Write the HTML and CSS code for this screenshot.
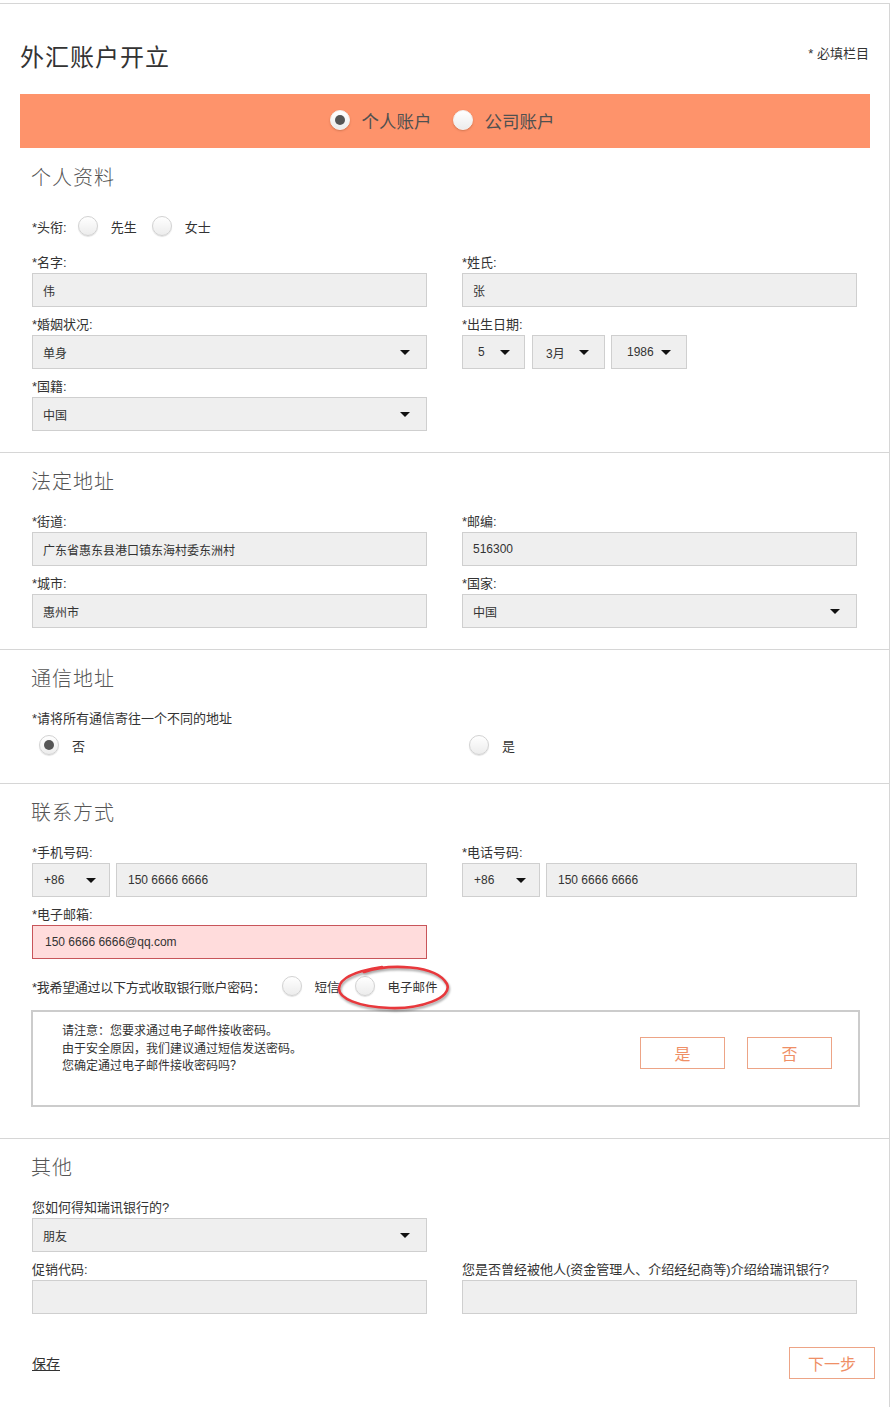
FILE: index.html
```html
<!DOCTYPE html>
<html lang="zh-CN">
<head>
<meta charset="utf-8">
<title>外汇账户开立</title>
<link rel="stylesheet" href="styles.css">
</head>
<body>
<div class="page">
  <header class="head">
    <h1 class="title">外汇账户开立</h1>
    <span class="req">* 必填栏目</span>
  </header>

  <div class="type-bar">
    <span class="radio light checked"></span><span class="type-txt">个人账户</span>
    <span class="radio light"></span><span class="type-txt last">公司账户</span>
  </div>

  <section class="sec first">
    <h2>个人资料</h2>
    <div class="title-row">
      <span class="lbl-inline">*头衔:</span>
      <span class="radio"></span><span class="rtxt">先生</span>
      <span class="radio"></span><span class="rtxt">女士</span>
    </div>
    <div class="grid">
      <div class="field"><div class="lbl">*名字:</div><div class="input">伟</div></div>
      <div class="field"><div class="lbl">*姓氏:</div><div class="input">张</div></div>
      <div class="field"><div class="lbl">*婚姻状况:</div><div class="input select">单身</div></div>
      <div class="field"><div class="lbl">*出生日期:</div>
        <div class="date">
          <div class="input select d1">5</div>
          <div class="input select d2">3月</div>
          <div class="input select d3">1986</div>
        </div>
      </div>
      <div class="field"><div class="lbl">*国籍:</div><div class="input select">中国</div></div>
    </div>
  </section>

  <section class="sec">
    <h2>法定地址</h2>
    <div class="grid">
      <div class="field"><div class="lbl">*街道:</div><div class="input">广东省惠东县港口镇东海村委东洲村</div></div>
      <div class="field"><div class="lbl">*邮编:</div><div class="input">516300</div></div>
      <div class="field"><div class="lbl">*城市:</div><div class="input">惠州市</div></div>
      <div class="field"><div class="lbl">*国家:</div><div class="input select">中国</div></div>
    </div>
  </section>

  <section class="sec s3">
    <h2>通信地址</h2>
    <div class="lbl">*请将所有通信寄往一个不同的地址</div>
    <div class="grid comm">
      <div class="comm-opt"><span class="radio checked"></span><span class="ctxt">否</span></div>
      <div class="comm-opt"><span class="radio"></span><span class="ctxt">是</span></div>
    </div>
  </section>

  <section class="sec s4">
    <h2>联系方式</h2>
    <div class="grid">
      <div class="field"><div class="lbl">*手机号码:</div>
        <div class="phone"><div class="input select code">+86</div><div class="input num">150 6666 6666</div></div>
      </div>
      <div class="field"><div class="lbl">*电话号码:</div>
        <div class="phone"><div class="input select code">+86</div><div class="input num">150 6666 6666</div></div>
      </div>
      <div class="field"><div class="lbl">*电子邮箱:</div><div class="input invalid">150 6666 6666@qq.com</div></div>
    </div>
    <div class="pass-row">
      <span class="lbl-inline pass-lbl">*我希望通过以下方式收取银行账户密码：</span>
      <span class="radio"></span><span class="ptxt">短信</span>
      <span class="radio"></span><span class="ptxt">电子邮件</span>
      <svg class="mark" width="116" height="48" viewBox="0 0 116 48">
        <path d="M28 8 C52 0 100 0 111 20 C117 34 84 45 54 44 C22 43 2 34 3 24 C4 14 20 7 46 3" fill="none" stroke="#e8383c" stroke-width="2.6" stroke-linecap="round"/>
      </svg>
    </div>
    <div class="notice">
      <div class="notice-txt">
        <div>请注意：您要求通过电子邮件接收密码。</div>
        <div>由于安全原因，我们建议通过短信发送密码。</div>
        <div>您确定通过电子邮件接收密码吗？</div>
      </div>
      <div class="notice-btns">
        <span class="btn">是</span>
        <span class="btn">否</span>
      </div>
    </div>
  </section>

  <section class="sec s5">
    <h2>其他</h2>
    <div class="grid">
      <div class="field"><div class="lbl">您如何得知瑞讯银行的?</div><div class="input select">朋友</div></div>
      <div class="field"></div>
      <div class="field"><div class="lbl">促销代码:</div><div class="input"></div></div>
      <div class="field"><div class="lbl">您是否曾经被他人(资金管理人、介绍经纪商等)介绍给瑞讯银行?</div><div class="input"></div></div>
    </div>
    <div class="footer">
      <a class="save">保存</a>
      <span class="btn next">下一步</span>
    </div>
  </section>
</div>
</body>
</html>
```

FILE: styles.css
```css
html, body {
  margin: 0;
  padding: 0;
  background: #fff;
}
body {
  font-family: "Liberation Sans", "Noto Sans CJK SC", sans-serif;
  color: #333;
  padding-top: 3px;
}
.page {
  width: 889px;
  border-top: 1px solid #d6d6d6;
  border-right: 1px solid #d6d6d6;
  min-height: 1420px;
}
.head {
  display: flex;
  justify-content: space-between;
  align-items: flex-start;
  padding: 37px 20px 0 20px;
}
.title {
  margin: 0;
  font-size: 24px;
  line-height: 34px;
  font-weight: normal;
  letter-spacing: 1px;
  color: #333;
}
.req {
  margin-top: 5px;
  font-size: 13px;
  line-height: 16px;
  color: #333;
}
.type-bar {
  margin: 19px 19px 0 20px;
  height: 54px;
  background: #fe936b;
  display: flex;
  align-items: center;
  justify-content: center;
  padding-right: 6px;
  padding-bottom: 2px;
  box-sizing: border-box;
}
.type-txt {
  font-size: 17.5px;
  color: #505050;
  margin-left: 12px;
  margin-right: 21px;
}
.type-txt.last { margin-right: 0; }

.radio {
  display: inline-block;
  flex: none;
  position: relative;
  box-sizing: border-box;
  width: 20px;
  height: 20px;
  border-radius: 50%;
  border: 1px solid #d2d2d2;
  background: linear-gradient(#ffffff, #ececec);
  box-shadow: 0 1px 1px rgba(0,0,0,0.12);
}
.radio.light {
  border-color: #f1f1f1;
  box-shadow: 0 1px 2px rgba(120,60,30,0.35);
}
.radio.checked::after {
  content: "";
  position: absolute;
  left: 4px;
  top: 4px;
  width: 10px;
  height: 10px;
  border-radius: 50%;
  background: #555;
}

.sec {
  border-top: 1px solid #d6d6d6;
  padding: 15px 32px 21px 32px;
}
.sec.first {
  border-top: none;
  padding-top: 16px;
}
.sec h2 {
  margin: 0 0 16px -1px;
  font-size: 20px;
  line-height: 28px;
  font-weight: 300;
  letter-spacing: 1px;
  color: #555;
}
.title-row {
  display: flex;
  align-items: center;
  height: 20px;
  margin: 24px 0 17px 0;
  font-size: 13px;
}
.lbl-inline { margin-right: 11px; }
.rtxt {
  margin-left: 13px;
  margin-right: 15px;
}
.grid {
  display: grid;
  grid-template-columns: 395px 395px;
  column-gap: 35px;
  row-gap: 8px;
}
.lbl {
  font-size: 13px;
  line-height: 20px;
  height: 20px;
  white-space: nowrap;
}
.input {
  box-sizing: border-box;
  height: 34px;
  border: 1px solid #cfcfcf;
  background: #efefef;
  padding: 0 10px;
  display: flex;
  align-items: center;
  font-size: 12px;
  color: #333;
  white-space: nowrap;
}
.select {
  justify-content: space-between;
  padding-right: 16px;
}
.select::after {
  content: "";
  width: 0;
  height: 0;
  border-left: 5px solid transparent;
  border-right: 5px solid transparent;
  border-top: 5px solid #111;
}
.date {
  display: flex;
}
.date .d1 { width: 63px; padding: 0 14px 0 15px; }
.date .d2 { width: 73px; padding: 0 15px 0 13px; margin-left: 7px; }
.date .d3 { width: 76px; padding: 0 15px 0 15px; margin-left: 6px; }

.comm {
  margin-top: 6px;
}
.comm-opt {
  display: flex;
  align-items: center;
  padding-left: 7px;
  height: 20px;
  font-size: 13px;
}
.ctxt { margin-left: 13px; }
.sec.s3 { padding-bottom: 28px; }

.phone {
  display: flex;
  gap: 6px;
}
.phone .code {
  width: 78px;
  flex: none;
  padding: 0 13px 0 11px;
}
.phone .num {
  flex: 1;
  padding-left: 11px;
}
.input.invalid {
  background: #ffdcdc;
  border-color: #c8555a;
  padding-left: 12px;
}
.pass-row {
  position: relative;
  display: flex;
  align-items: center;
  height: 20px;
  margin-top: 17px;
  font-size: 13px;
}
.pass-lbl {
  margin-right: 17px;
  letter-spacing: -0.3px;
}
.ptxt {
  font-size: 12.5px;
  margin-left: 12px;
  margin-right: 16px;
}
.mark {
  position: absolute;
  left: 304px;
  top: -12px;
  filter: drop-shadow(1px 2px 1px rgba(0,0,0,0.35));
}
.notice {
  box-sizing: border-box;
  width: 829px;
  height: 97px;
  margin: 14px 0 0 -1px;
  border: 2px solid #cccccc;
  display: flex;
  justify-content: space-between;
  align-items: flex-start;
  padding: 11px 26px 0 29px;
}
.notice-txt {
  font-size: 12px;
  line-height: 17.5px;
  color: #333;
}
.notice-btns {
  display: flex;
  gap: 22px;
  margin-top: 14px;
}
.btn {
  box-sizing: border-box;
  width: 85px;
  height: 32px;
  border: 1px solid #eda486;
  background: #fff;
  color: #ef8f66;
  font-size: 16px;
  display: flex;
  align-items: center;
  justify-content: center;
}
.sec.s4 { padding-bottom: 31px; }
.sec.s5 { padding-bottom: 28px; }
.footer {
  display: flex;
  justify-content: space-between;
  align-items: center;
  margin: 33px -18px 0 0;
}
.save {
  font-size: 14px;
  color: #333;
  text-decoration: underline;
}
.btn.next {
  width: 86px;
}
```
